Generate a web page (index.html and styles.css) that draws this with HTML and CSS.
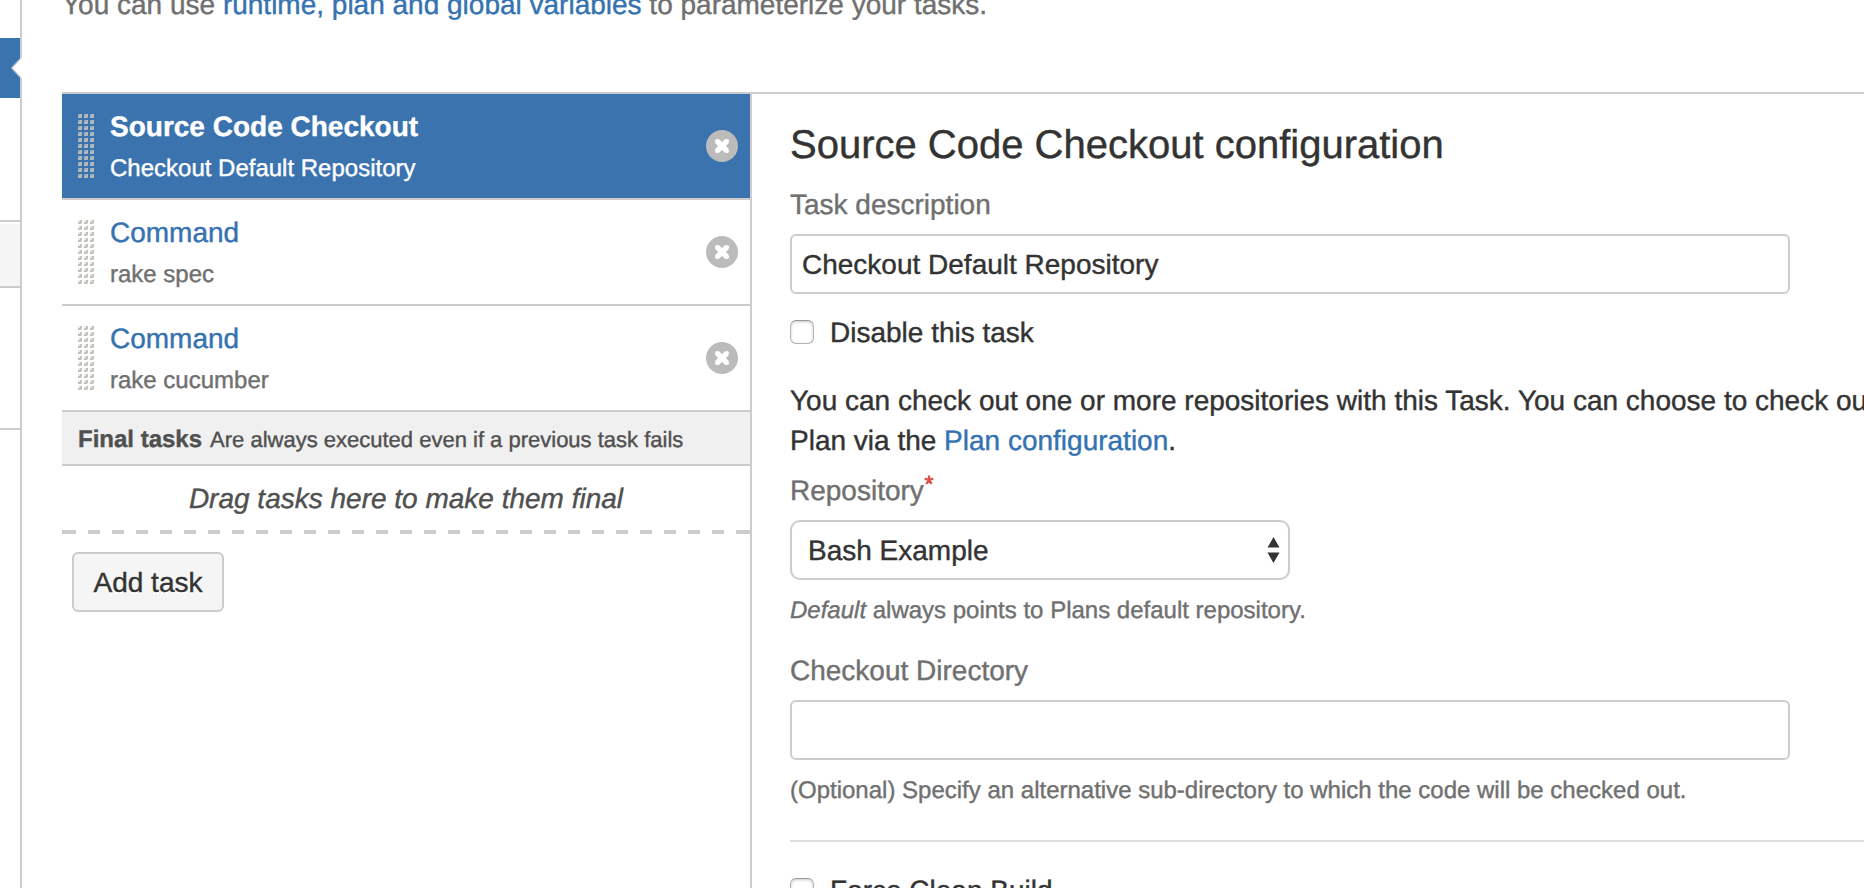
FILE: index.html
```html
<!DOCTYPE html>
<html lang="en">
<head>
<meta charset="utf-8">
<title>Source Code Checkout configuration</title>
<link rel="stylesheet" href="styles.css">
</head>
<body>
<svg class="defs" width="0" height="0" aria-hidden="true">
  <defs>
    <pattern id="dot" width="6" height="6" patternUnits="userSpaceOnUse">
      <rect width="4" height="4" fill="#d8d8d4" opacity=".55"/>
      <path d="M2 0h2v3H3v1H0V2h2z" fill="#bbbbb6" opacity=".85"/>
    </pattern>
    <symbol id="grip" viewBox="0 0 16 65"><rect width="16" height="65" fill="url(#dot)"/></symbol>
    <symbol id="remove" viewBox="0 0 32 32">
      <circle cx="16" cy="16" r="16" fill="#bbb"/>
      <path d="M11 11l10 10M21 11L11 21" stroke="#fff" stroke-width="5.4" stroke-linecap="butt"/>
      <path d="M11 11l10 10M21 11L11 21" stroke="#fff" stroke-width="4" stroke-linecap="round"/>
    </symbol>
  </defs>
</svg>
<div class="page">
  <aside class="sidebar">
    <div class="side-active"><svg class="notch" width="11" height="22" viewBox="0 0 11 22"><path d="M11 0L1 11l10 11z" fill="#fff"/><path d="M10.500 .5L.8 11l9.700 10.500" fill="none" stroke="#ccc" stroke-width="1.200"/></svg></div>
    <div class="side-space"></div>
    <div class="side-heading"></div>
    <div class="side-group"></div>
  </aside>
  <main class="main">
    <p class="intro">You can use <a href="#">runtime, plan and global variables</a> to parameterize your tasks.</p>
    <div class="editor">
      <section class="tasks">
        <ul class="task-list">
          <li class="task active">
            <svg class="grip" width="16" height="65"><use href="#grip"/></svg>
            <div class="task-text"><h3>Source Code Checkout</h3><p>Checkout Default Repository</p></div>
            <svg class="remove" width="32" height="32"><use href="#remove"/></svg>
          </li>
          <li class="task">
            <svg class="grip" width="16" height="65"><use href="#grip"/></svg>
            <div class="task-text"><h3>Command</h3><p>rake spec</p></div>
            <svg class="remove" width="32" height="32"><use href="#remove"/></svg>
          </li>
          <li class="task">
            <svg class="grip" width="16" height="65"><use href="#grip"/></svg>
            <div class="task-text"><h3>Command</h3><p>rake cucumber</p></div>
            <svg class="remove" width="32" height="32"><use href="#remove"/></svg>
          </li>
        </ul>
        <div class="final"><strong>Final tasks</strong><span>Are always executed even if a previous task fails</span></div>
        <div class="drop">Drag tasks here to make them final</div>
        <button class="add" type="button">Add task</button>
      </section>
      <form class="config">
        <h2>Source Code Checkout configuration</h2>
        <label class="label">Task description</label>
        <input class="text" type="text" value="Checkout Default Repository">
        <label class="check"><input type="checkbox">Disable this task</label>
        <p class="copy">You can check out one or more repositories with this Task. You can choose to check out<br>Plan via the <a href="#">Plan configuration</a>.</p>
        <label class="label repo">Repository<svg class="required" width="10" height="10" viewBox="0 0 10 10"><path d="M5 5V.5M5 5L.7 3.600M5 5l4.300-1.400M5 5L2.300 8.800M5 5l2.700 3.800" stroke="#d9534a" stroke-width="2.300"/></svg></label>
        <div class="select"><span>Bash Example</span><svg width="13" height="26" viewBox="0 0 13 26"><path d="M6.500 0L12.500 10.500H.5zM6.500 26L.5 15.500h12z" fill="#333"/></svg></div>
        <p class="help"><em>Default</em> always points to Plans default repository.</p>
        <label class="label directory">Checkout Directory</label>
        <input class="text" type="text">
        <p class="help">(Optional) Specify an alternative sub-directory to which the code will be checked out.</p>
        <hr>
        <label class="check"><input type="checkbox">Force Clean Build</label>
      </form>
    </div>
  </main>
</div>
</body>
</html>
```
FILE: styles.css
```css
* { box-sizing: border-box; margin: 0; padding: 0; }
html, body { width: 100%; height: 888px; overflow: hidden; background: #fff; }
body { font: 28px/40px "Liberation Sans", Arial, sans-serif; color: #333; text-rendering: geometricPrecision; -webkit-text-stroke: .4px; }
a { color: #3572b0; text-decoration: none; }
.defs { display: block; height: 0; }
.page { display: flex; height: 888px; overflow: hidden; }

.sidebar { flex: 0 0 22px; padding-top: 38px; border-right: 2px solid #ccc; }
.side-active { position: relative; height: 60px; background: #3b73af; }
.notch { position: absolute; left: 11px; top: 19px; }
.side-space { height: 122px; }
.side-heading { height: 68px; border: solid #ccc; border-width: 2px 0; background: #f5f5f5; box-shadow: inset 0 2px #fff; }
.side-group { height: 142px; border-bottom: 2px solid #ccc; }

.main { flex: 1; min-width: 0; padding-left: 40px; }
.intro { margin-top: -15px; color: #707070; white-space: nowrap; }
.editor { display: flex; height: 800px; margin-top: 67px; border-top: 2px solid #ccc; }

.tasks { flex: 0 0 690px; border-right: 2px solid #ccc; }
.task-list { list-style: none; }
.task { display: flex; height: 106px; padding: 13px 12px 0 16px; border-bottom: 2px solid #ccc; }
.grip { margin: 7px 16px 0 0; }
.task-text { flex: 1; }
.task h3 { font-size: 28px; font-weight: 400; color: #3572b0; }
.task p { margin-top: 2px; font-size: 24px; color: #707070; }
.remove { margin-top: 23px; }
.task.active { background: #3b73af; }
.task.active h3 { font-weight: 700; color: #fff; }
.task.active p { color: #fff; }
.final { display: flex; align-items: baseline; gap: 8px; height: 54px; padding: 2px 0 0 16px; border-bottom: 2px solid #ccc; background: #f0f0f0; font-size: 24px; line-height: 52px; color: #505050; }
.final span { font-size: 22px; }
.drop {
  height: 68px; padding-top: 13px; text-align: center; font-style: italic; color: #505050;
  background:
    linear-gradient(#ccc, #ccc) 0 100% / 2px 4px no-repeat,
    linear-gradient(#ccc, #ccc) 100% 100% / 2px 4px no-repeat,
    repeating-linear-gradient(90deg, #ccc 0 12px, transparent 12px 24px) 2px 100% / 684px 4px no-repeat;
}
.add { display: block; width: 152px; height: 60px; margin: 18px 0 0 10px; padding-top: 2px; border: 2px solid #ccc; border-radius: 6px; background: #f5f5f5; font: inherit; color: #333; text-shadow: 0 2px #fff; }

.config { flex: 1; min-width: 0; padding: 27px 0 0 38px; }
.config h2 { font-size: 40px; font-weight: 400; line-height: 48px; white-space: nowrap; }
.label { display: block; margin-top: 16px; color: #707070; }
.text { display: block; width: 1000px; height: 60px; margin-top: 9px; padding: 2px 10px 0; border: 2px solid #ccc; border-radius: 6px; background: #fff; font: inherit; color: #333; outline: 0; }
.check { display: flex; align-items: center; gap: 16px; margin-top: 19px; }
.check input { appearance: none; width: 24px; height: 24px; margin-bottom: 2px; border: 1px solid #b4b4b4; border-top-color: #999; border-radius: 6px; background: #fff; box-shadow: inset 0 1px 3px rgba(0, 0, 0, .22); }
.copy { margin-top: 28px; white-space: nowrap; }
.label.repo { display: flex; margin-top: 10px; }
.required { margin-top: 4px; }
.select { display: flex; align-items: center; justify-content: space-between; width: 500px; height: 60px; margin-top: 9px; padding: 2px 8px 0 16px; border: 2px solid #ccc; border-radius: 10px; }
.select svg { margin-bottom: 2px; }
.help { margin-top: 11px; font-size: 24px; color: #707070; white-space: nowrap; }
.label.directory { margin-top: 20px; }
hr { height: 2px; margin: 29px 0; border: 0; background: #ddd; }
hr + .check { margin-top: 0; }
```
